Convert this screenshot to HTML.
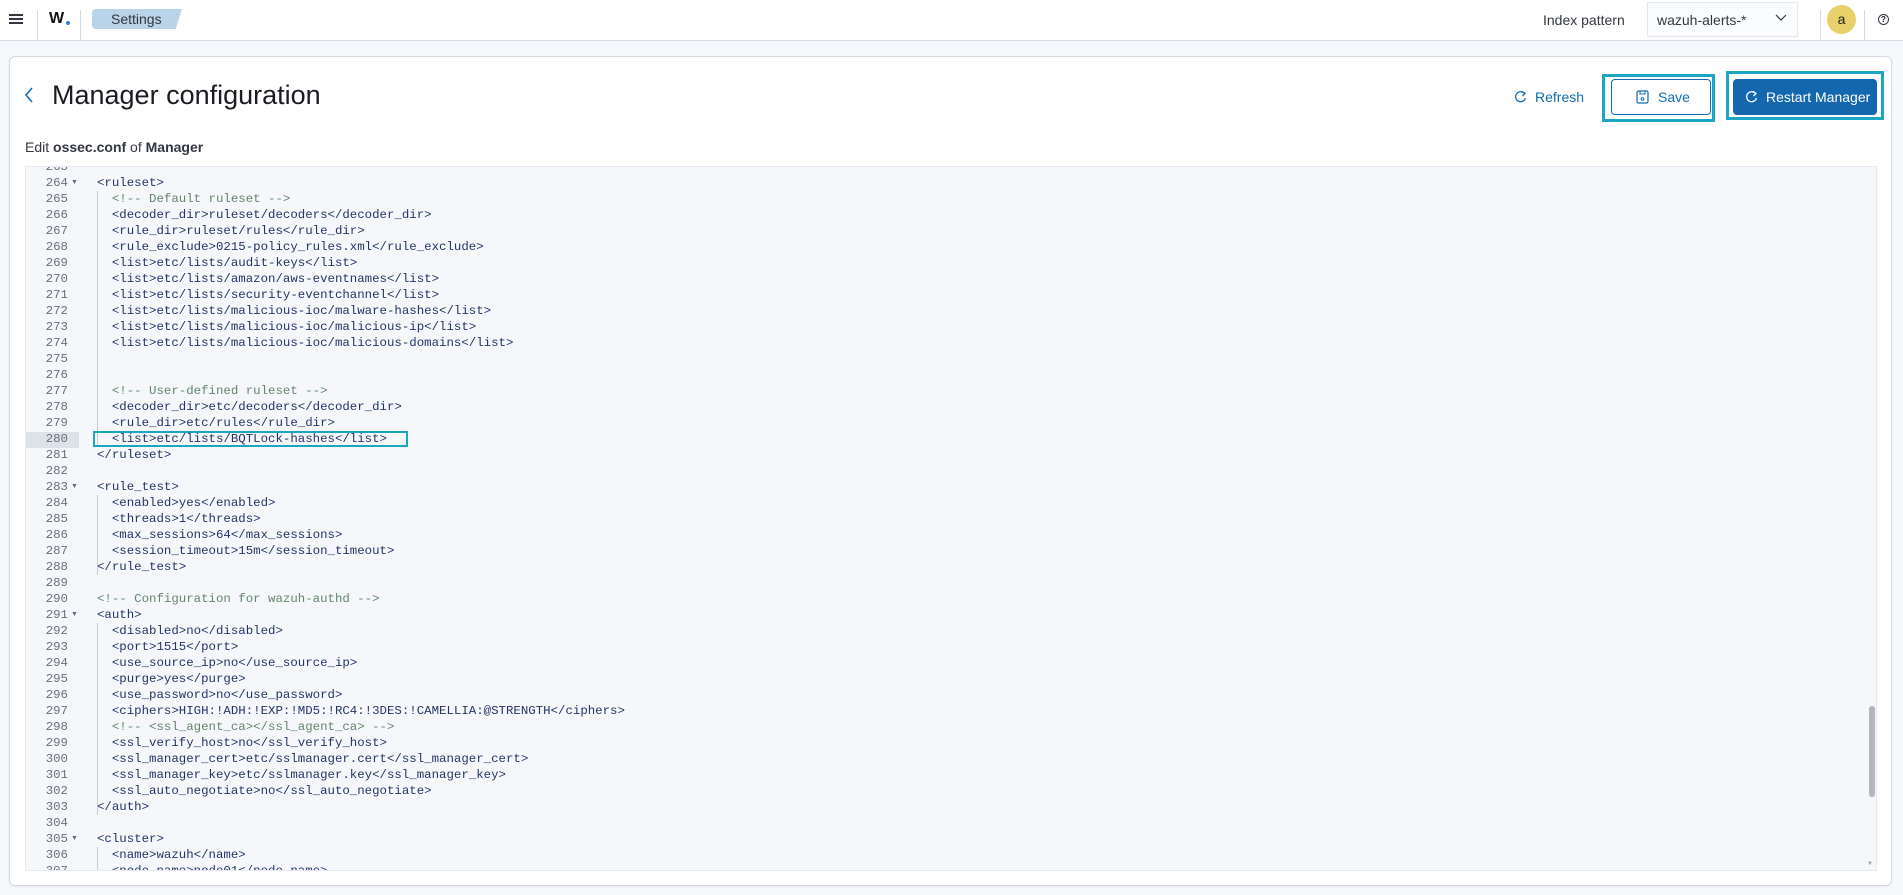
<!DOCTYPE html>
<html><head><meta charset="utf-8"><style>
*{margin:0;padding:0;box-sizing:border-box}
body{width:1903px;height:895px;overflow:hidden;background:#f7f8fc;font-family:"Liberation Sans",sans-serif;color:#1a1c21;position:relative}
.abs{position:absolute}
.top{left:0;top:0;width:1903px;height:41px;background:#fff;border-bottom:1px solid #d3dae6}
.panel{left:9px;top:56px;width:1883px;height:830px;background:#fff;border:1px solid #d3dae6;border-radius:6px;box-shadow:0 1px 3px rgba(0,0,0,.06)}
.ed{left:25px;top:166px;width:1852px;height:705px;background:#f5f7fa;overflow:hidden;border:1px solid #e6e9ef}
.gut{left:0;top:0;width:53px;height:705px;background:#f5f7fa}
.ln{position:absolute;left:0;width:42px;text-align:right;font:12.4px/16px "Liberation Mono",monospace;color:#69707d}
.fold{position:absolute;left:45px;font-size:7px;line-height:16px;color:#69707d}
.cd{position:absolute;left:71px;font:12.4px/16px "Liberation Mono",monospace;color:#243468;white-space:pre}
.cm{color:#64876c}
.guide{position:absolute;left:71px;width:1px;background:#c7ccd6}
</style></head><body>
<div class="abs top">
  <div class="abs" style="left:9px;top:14px;width:14px;height:2px;background:#343741;box-shadow:0 4px 0 #343741,0 8px 0 #343741"></div>
  <div class="abs" style="left:37px;top:10px;width:1px;height:31px;background:#d3dae6"></div>
  <div class="abs" style="left:49px;top:10px;font:bold 16px 'Liberation Sans',sans-serif;color:#111">W</div>
  <div class="abs" style="left:66px;top:21px;width:4px;height:4px;border-radius:2px;background:#3e7fd6"></div>
  <div class="abs" style="left:80px;top:10px;width:1px;height:31px;background:#d3dae6"></div>
  <div class="abs" style="left:92px;top:9px;width:90px;height:20px;background:#b9d4e8;clip-path:polygon(0 0,100% 0,93% 100%,0 100%);border-radius:4px 0 0 4px"></div>
  <div class="abs" style="left:111px;top:11px;font-size:14px;color:#343741">Settings</div>
  <div class="abs" style="left:1543px;top:12px;font-size:14px;color:#343741">Index pattern</div>
  <div class="abs" style="left:1647px;top:2px;width:151px;height:35px;background:#fbfcfd;border:1px solid #e5e8ee"></div>
  <div class="abs" style="left:1657px;top:12px;font-size:14px;color:#343741">wazuh-alerts-*</div>
  <svg class="abs" style="left:1775px;top:14px" width="12" height="8"><path d="M1 1l5 5 5-5" fill="none" stroke="#343741" stroke-width="1.2"/></svg>
  <div class="abs" style="left:1820px;top:10px;width:1px;height:31px;background:#d3dae6"></div>
  <div class="abs" style="left:1827px;top:5px;width:29px;height:29px;border-radius:50%;background:#e8d06b;text-align:center;font:14px/29px 'Liberation Sans',sans-serif;color:#1a1c21">a</div>
  <div class="abs" style="left:1864px;top:10px;width:1px;height:31px;background:#d3dae6"></div>
  <div class="abs" style="left:1878px;top:14px;width:11px;height:11px;border:1.2px solid #343741;border-radius:50%;font:bold 8px/9px 'Liberation Sans';text-align:center">?</div>
</div>
<div class="abs panel"></div>
<svg class="abs" style="left:24px;top:87px" width="10" height="16"><path d="M8 1L2 8l6 7" fill="none" stroke="#0f6eb5" stroke-width="1.6"/></svg>
<div class="abs" style="left:52px;top:80px;font-size:27px;color:#1a1c21">Manager configuration</div>
<div class="abs" style="left:25px;top:139px;font-size:14px;color:#343741">Edit <b>ossec.conf</b> of <b>Manager</b></div>
<svg class="abs" style="left:1514px;top:90px" width="13" height="13"><path d="M10.5 3.5A5 5 0 1 0 11.5 8" fill="none" stroke="#0f6eb5" stroke-width="1.3"/><path d="M8 1.5l3 2-2.5 2.5" fill="none" stroke="#0f6eb5" stroke-width="1.3"/></svg>
<div class="abs" style="left:1535px;top:89px;font-size:14px;color:#0f6eb5">Refresh</div>
<div class="abs" style="left:1602px;top:74px;width:113px;height:48px;border:3px solid #1ba6c4"></div>
<div class="abs" style="left:1611px;top:79px;width:100px;height:36px;border:1px solid #0f6eb5;border-radius:4px;background:#fff"></div>
<svg class="abs" style="left:1636px;top:90px" width="13" height="14"><rect x="1" y="1" width="11" height="12" rx="1.5" fill="none" stroke="#0f6eb5" stroke-width="1.2"/><rect x="4" y="1" width="5" height="3" fill="none" stroke="#0f6eb5"/><circle cx="6.5" cy="9" r="1.3" fill="none" stroke="#0f6eb5"/></svg>
<div class="abs" style="left:1658px;top:89px;font-size:14px;color:#0f6eb5">Save</div>
<div class="abs" style="left:1726px;top:71px;width:158px;height:49px;border:3px solid #1ba6c4"></div>
<div class="abs" style="left:1733px;top:79px;width:144px;height:36px;border-radius:4px;background:#1466ad"></div>
<svg class="abs" style="left:1745px;top:90px" width="13" height="13"><path d="M10.5 3.5A5 5 0 1 0 11.5 8" fill="none" stroke="#fff" stroke-width="1.3"/><path d="M8 1.5l3 2-2.5 2.5" fill="none" stroke="#fff" stroke-width="1.3"/></svg>
<div class="abs" style="left:1766px;top:89px;font-size:14px;color:#fff">Restart Manager</div>

<div class="abs ed">
<div class="abs gut"></div>
<div class="abs" style="left:0;top:265px;width:53px;height:16px;background:#dde1e8"></div>
<div id="g"></div>
<div class="abs" style="left:1843px;top:539px;width:6px;height:91px;border-radius:3px;background:#b1b5bc"></div>
<div class="abs" style="left:1841px;top:694px;font-size:6px;color:#98a0ab">▼</div>
</div>
<div class="abs" style="left:93px;top:431px;width:315px;height:16px;border:2px solid #1ba6c4"></div>
<script>
var L=[
[263,0,'<!-- -->',0],
[264,1,'<ruleset>',0],
[265,0,'  <!-- Default ruleset -->',1],
[266,0,'  <decoder_dir>ruleset/decoders</decoder_dir>'],
[267,0,'  <rule_dir>ruleset/rules</rule_dir>'],
[268,0,'  <rule_exclude>0215-policy_rules.xml</rule_exclude>'],
[269,0,'  <list>etc/lists/audit-keys</list>'],
[270,0,'  <list>etc/lists/amazon/aws-eventnames</list>'],
[271,0,'  <list>etc/lists/security-eventchannel</list>'],
[272,0,'  <list>etc/lists/malicious-ioc/malware-hashes</list>'],
[273,0,'  <list>etc/lists/malicious-ioc/malicious-ip</list>'],
[274,0,'  <list>etc/lists/malicious-ioc/malicious-domains</list>'],
[275,0,''],[276,0,''],
[277,0,'  <!-- User-defined ruleset -->',1],
[278,0,'  <decoder_dir>etc/decoders</decoder_dir>'],
[279,0,'  <rule_dir>etc/rules</rule_dir>'],
[280,0,'  <list>etc/lists/BQTLock-hashes</list>'],
[281,0,'</ruleset>'],
[282,0,''],
[283,1,'<rule_test>'],
[284,0,'  <enabled>yes</enabled>'],
[285,0,'  <threads>1</threads>'],
[286,0,'  <max_sessions>64</max_sessions>'],
[287,0,'  <session_timeout>15m</session_timeout>'],
[288,0,'</rule_test>'],
[289,0,''],
[290,0,'<!-- Configuration for wazuh-authd -->',1],
[291,1,'<auth>'],
[292,0,'  <disabled>no</disabled>'],
[293,0,'  <port>1515</port>'],
[294,0,'  <use_source_ip>no</use_source_ip>'],
[295,0,'  <purge>yes</purge>'],
[296,0,'  <use_password>no</use_password>'],
[297,0,'  <ciphers>HIGH:!ADH:!EXP:!MD5:!RC4:!3DES:!CAMELLIA:@STRENGTH</ciphers>'],
[298,0,'  <!-- <ssl_agent_ca></ssl_agent_ca> -->',1],
[299,0,'  <ssl_verify_host>no</ssl_verify_host>'],
[300,0,'  <ssl_manager_cert>etc/sslmanager.cert</ssl_manager_cert>'],
[301,0,'  <ssl_manager_key>etc/sslmanager.key</ssl_manager_key>'],
[302,0,'  <ssl_auto_negotiate>no</ssl_auto_negotiate>'],
[303,0,'</auth>'],
[304,0,''],
[305,1,'<cluster>'],
[306,0,'  <name>wazuh</name>'],
[307,0,'  <node_name>node01</node_name>']];
function e(s){return s.replace(/&/g,'&amp;').replace(/</g,'&lt;').replace(/>/g,'&gt;')}
var h='';
L.forEach(function(l){var t=-8+(l[0]-263)*16;
h+='<div class="ln" style="top:'+t+'px">'+l[0]+'</div>';
if(l[1])h+='<div class="fold" style="top:'+t+'px">▼</div>';
if(l[0]!=263)h+='<div class="cd'+(l[3]?' cm':'')+'" style="top:'+t+'px">'+e(l[2])+'</div>';
});
[[265,280],[284,288],[292,303],[306,308]].forEach(function(r){h+='<div class="guide" style="top:'+(-8+(r[0]-263)*16)+'px;height:'+((r[1]-r[0]+1)*16)+'px"></div>'});
document.getElementById('g').innerHTML=h;
</script>
</body></html>
